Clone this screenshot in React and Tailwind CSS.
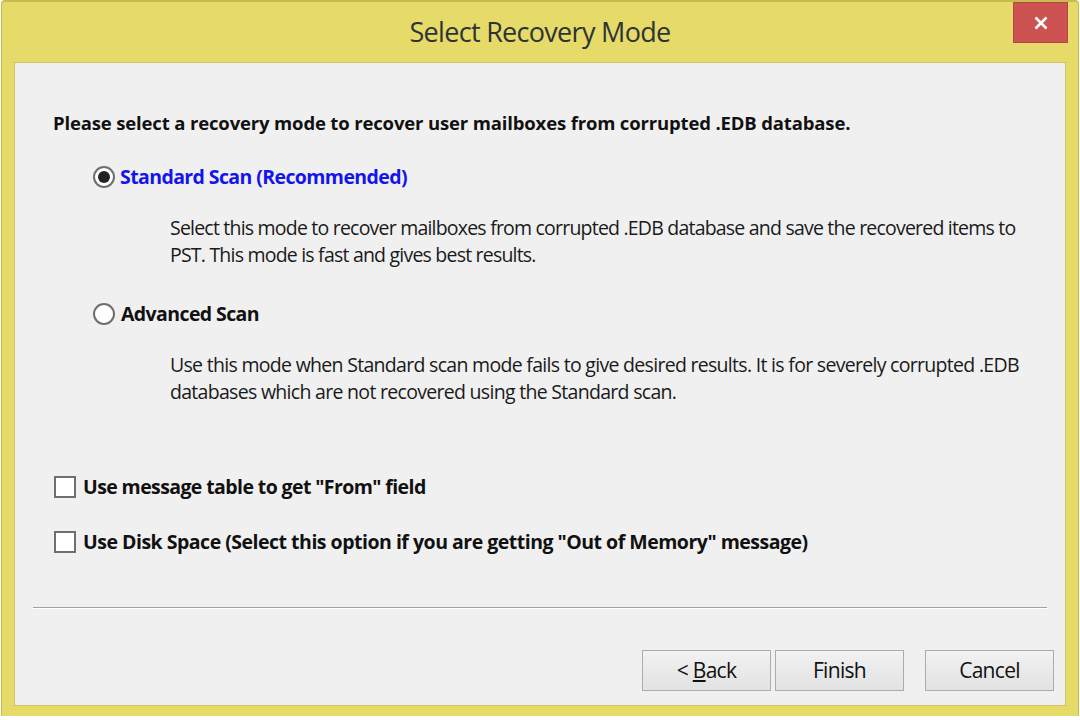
import React from "react";

const F = { fontFamily: "'Open Sans', 'Liberation Sans', sans-serif" };

function Radio({ checked }) {
  return (
    <span className="relative w-[22px] h-[22px] rounded-full border-2 border-[#6f6f6f] bg-white shrink-0 flex items-center justify-center">
      {checked && <span className="w-[12px] h-[12px] rounded-full bg-[#222]" />}
    </span>
  );
}

function Check() {
  return <span className="w-[22px] h-[22px] border-2 border-[#6f6f6f] bg-white shrink-0" />;
}

function Btn({ children, className = "" }) {
  return (
    <button className={"h-[41px] w-[129px] border border-[#acacac] bg-gradient-to-b from-[#f2f2f2] to-[#e2e2e2] text-[21px] text-[#111] tracking-[-0.7px] flex items-center justify-center " + className} style={F}>
      {children}
    </button>
  );
}

export default function App() {
  return (
    <div className="w-[1080px] h-[720px] bg-white overflow-hidden">
      <div className="w-[1078px] h-[716px] ml-[1px] bg-[#e6da68] border-t-[2px] border-l border-r border-[#c9bb52] rounded-tl-[4px] rounded-tr-[4px] flex flex-col px-[12px] pb-[10px]">
        <div className="h-[60px] relative flex items-center justify-center">
          <span className="text-[27px] text-[#2e3436] tracking-[-0.7px]" style={F}>Select Recovery Mode</span>
          <div className="absolute right-[-2px] top-0 w-[55px] h-[41px] bg-[#cd5353] border border-[#b84444] flex items-center justify-center">
            <svg width="16" height="16" viewBox="0 0 16 16"><path d="M2.5 2.5 L13.5 13.5 M13.5 2.5 L2.5 13.5" stroke="white" strokeWidth="2.6" /></svg>
          </div>
        </div>
        <div className="flex-1 bg-[#f0f0f0] border border-[#cfc36a] flex flex-col" style={F}>
          <div className="pt-[48px] pl-[38px] text-[18.5px] font-bold text-[#111] tracking-[-0.15px] leading-[24px]">
            Please select a recovery mode to recover user mailboxes from corrupted .EDB database.
          </div>
          <div className="mt-[30px] pl-[78px] flex items-center gap-[5px]">
            <Radio checked />
            <span className="text-[19.5px] font-bold text-[#1414ee] tracking-[-0.6px] leading-[24px]">Standard Scan (Recommended)</span>
          </div>
          <div className="mt-[25px] pl-[155px] pr-[38px] text-[19.5px] text-[#1a1a1a] leading-[27px] tracking-[-0.79px]">
            Select this mode to recover mailboxes from corrupted .EDB database and save the recovered items to PST. This mode is fast and gives best results.
          </div>
          <div className="mt-[34px] pl-[78px] flex items-center gap-[6px]">
            <Radio />
            <span className="text-[19.5px] font-bold text-[#111] tracking-[-0.6px] leading-[24px]">Advanced Scan</span>
          </div>
          <div className="mt-[25px] pl-[155px] pr-[38px] text-[19.5px] text-[#1a1a1a] leading-[27px] tracking-[-0.7px]">
            Use this mode when Standard scan mode fails to give desired results. It is for severely corrupted .EDB databases which are not recovered using the Standard scan.
          </div>
          <div className="mt-[70px] pl-[39px] flex items-center gap-[7px]">
            <Check />
            <span className="text-[19.5px] font-bold text-[#111] tracking-[-0.6px] leading-[24px]">Use message table to get "From" field</span>
          </div>
          <div className="mt-[31px] pl-[39px] flex items-center gap-[7px]">
            <Check />
            <span className="text-[19.5px] font-bold text-[#111] tracking-[-0.5px] leading-[24px]">Use Disk Space (Select this option if you are getting "Out of Memory" message)</span>
          </div>
          <div className="mt-[53px] mx-[18px] h-[2px] border-t border-[#a0a0a0] border-b border-b-white" />
          <div className="mt-[41px] flex pl-[627px] gap-[4px]">
            <Btn><span>&lt; <span className="underline">B</span>ack</span></Btn>
            <Btn>Finish</Btn>
            <Btn className="ml-[17px]">Cancel</Btn>
          </div>
        </div>
      </div>
    </div>
  );
}
